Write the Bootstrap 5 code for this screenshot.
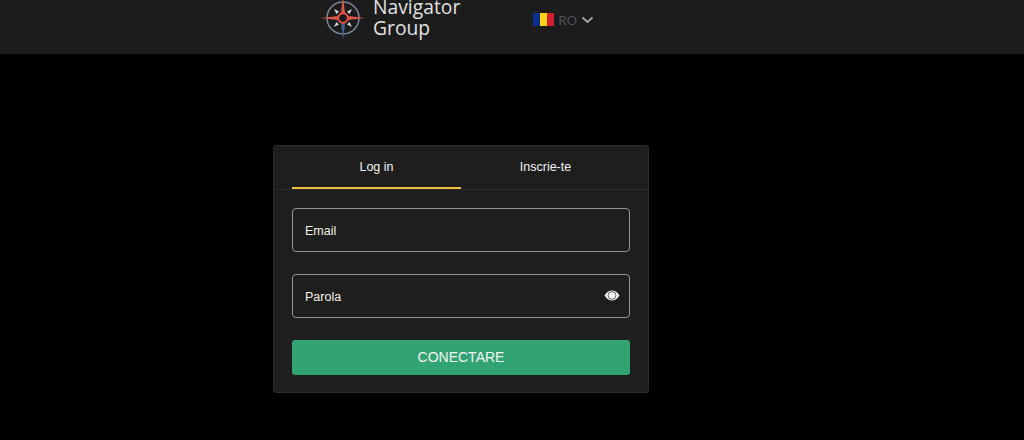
<!DOCTYPE html>
<html lang="en">
<head>
  <meta charset="UTF-8" />
  <meta name="viewport" content="width=device-width, initial-scale=1.0"/>
  <title>Navigator Group</title>
  <link href="https://cdn.jsdelivr.net/npm/bootstrap@5.3.3/dist/css/bootstrap.min.css" rel="stylesheet"/>
  <style>
    html, body {
      height: 100%;
      overflow: hidden;
    }

    body {
      background-color: #000;
      font-family: "Liberation Sans", Arial, sans-serif;
    }

    .top-bar {
      height: 54px;
      background-color: #1c1c1c;
      padding-left: 321px;
      padding-bottom: 14px;
      overflow: hidden;
    }

    .brand-name {
      font-family: "Open Sans", sans-serif;
      font-size: 19.3px;
      line-height: 21px;
      color: #e2e2e2;
      margin-left: 8px;
      margin-bottom: 2px;
    }

    .lang-picker {
      margin-left: 73px;
      margin-bottom: 10px;
      font-family: "Open Sans", sans-serif;
      font-size: 13.500px;
      color: #55555c;
      gap: 4px;
    }

    .login-box {
      width: 376px;
      height: 248px;
      margin: 91px 0 0 273px;
      background-color: #1e1e1e;
      border: 1px solid #2c2c2c;
      border-radius: 3px;
    }

    .tab-strip {
      padding: 0 18px;
      height: 44px;
      border-bottom: 1px solid #2c2c2c;
    }

    .tab-item {
      width: 169px;
      padding-top: 2px;
      font-size: 12.5px;
      color: #f2f2f2;
      text-decoration: none;
      border-bottom: 2px solid transparent;
    }

    .tab-item.current {
      border-bottom-color: #f0bd3f;
    }

    .login-form {
      padding: 18px 18px 0;
    }

    .field-wrap {
      height: 44px;
      margin-bottom: 22px;
    }

    .login-form .form-control {
      height: 44px;
      background-color: transparent;
      border: 1px solid #969696;
      border-radius: 4px;
      color: #fff;
      font-size: 12.5px;
      padding: 2px 40px 0 12px;
    }

    .login-form .form-control::placeholder {
      color: #f5f0e6;
      opacity: 1;
    }

    .eye-btn {
      position: absolute;
      top: 15px;
      right: 10px;
      line-height: 0;
    }

    .connect-btn {
      height: 35px;
      background-color: #32a373;
      border: 0;
      border-radius: 3px;
      color: #f4f4f4;
      font-size: 14px;
      padding: 0;
    }
  </style>
</head>
<body>
  <header class="top-bar d-flex align-items-end">
    <svg width="44" height="44" viewBox="0 0 44 44" aria-hidden="true">
      <circle cx="22" cy="22" r="16" fill="none" stroke="#7d8799" stroke-width="1.500" />
      <path d="M22 44 L24 27 L20 27 Z" fill="#3f5f8c" />
      <path d="M20.500 24 H23.500 V32 H20.500 Z" fill="#3f5f8c" />
      <path d="M22 0 L24 17 L20 17 Z" fill="#d8564a" />
      <path d="M0 22 L17 20 L17 24 Z M44 22 L27 20 L27 24 Z" fill="#d8564a" />
      <path d="M13 13 L18 15.500 L15.500 18 Z M31 13 L26 15.500 L28.500 18 Z M13 31 L18 28.500 L15.500 26 Z M31 31 L26 28.500 L28.500 26 Z" fill="#d0d6de" />
      <circle cx="22" cy="22" r="4.800" fill="#1c1c1c" stroke="#ee5040" stroke-width="2" />
    </svg>
    <div class="brand-name">Navigator<br>Group</div>
    <div class="lang-picker d-flex align-items-center">
      <svg width="21" height="13" viewBox="0 0 21 13" aria-hidden="true">
        <rect width="7" height="13" fill="#0b2f8f" />
        <rect x="7" width="7" height="13" fill="#fcd116" />
        <rect x="14" width="7" height="13" fill="#d3202f" />
      </svg>
      <span>RO</span>
      <svg width="13" height="8" viewBox="0 0 13 8" aria-hidden="true">
        <path d="M1.500 1.500 L6.500 6 L11.500 1.500" fill="none" stroke="#a8a8a8" stroke-width="1.700" />
      </svg>
    </div>
  </header>

  <main class="login-box">
    <nav class="tab-strip d-flex">
      <a class="tab-item current d-flex align-items-center justify-content-center" href="#">Log in</a>
      <a class="tab-item d-flex align-items-center justify-content-center" href="#">Inscrie-te</a>
    </nav>
    <form class="login-form">
      <div class="field-wrap position-relative">
        <input class="form-control" type="email" placeholder="Email" />
      </div>
      <div class="field-wrap position-relative">
        <input class="form-control" type="password" placeholder="Parola" />
        <span class="eye-btn">
          <svg width="16" height="13" viewBox="0 0 16 13" aria-hidden="true">
            <path d="M0.500 6.500 C3 2.500 5.500 1.500 8 1.500 C10.500 1.500 13 2.500 15.500 6.500 C13 10.500 10.500 11.500 8 11.500 C5.500 11.500 3 10.500 0.500 6.500 Z" fill="#f1f1f1" />
            <circle cx="8" cy="6.500" r="3.900" fill="none" stroke="#2b2b2b" stroke-width="0.700" />
          </svg>
        </span>
      </div>
      <button class="connect-btn btn w-100" type="button">CONECTARE</button>
    </form>
  </main>

  <script src="https://cdn.jsdelivr.net/npm/bootstrap@5.3.3/dist/js/bootstrap.bundle.min.js"></script>
</body>
</html>
